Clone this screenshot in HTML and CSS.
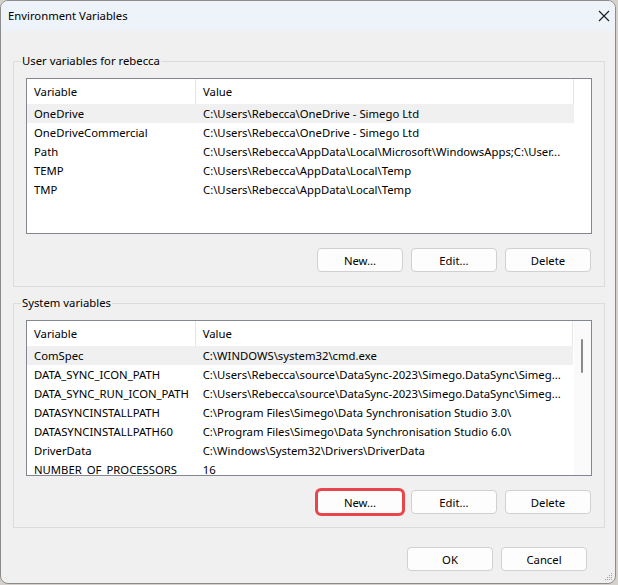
FILE: index.html
```html
<!DOCTYPE html>
<html>
<head>
<meta charset="utf-8">
<link rel="stylesheet" href="styles.css">
</head>
<body>
<div class="window">
  <div class="titlebar">
    <span class="title">Environment Variables</span>
    <svg class="close" width="12" height="12" viewBox="0 0 12 12"><path d="M1 1 L11 11 M11 1 L1 11" stroke="#1a1a1a" stroke-width="1.1" fill="none"/></svg>
  </div>
  <div class="content">
    <fieldset class="group">
      <legend>User variables for rebecca</legend>
      <div class="list">
        <div class="table">
          <div class="thead"><div class="th c1">Variable</div><div class="th c2">Value</div></div>
          <div class="row sel"><span class="c1">OneDrive</span><span class="c2">C:\Users\Rebecca\OneDrive - Simego Ltd</span></div>
          <div class="row"><span class="c1">OneDriveCommercial</span><span class="c2">C:\Users\Rebecca\OneDrive - Simego Ltd</span></div>
          <div class="row"><span class="c1">Path</span><span class="c2">C:\Users\Rebecca\AppData\Local\Microsoft\WindowsApps;C:\User...</span></div>
          <div class="row"><span class="c1">TEMP</span><span class="c2">C:\Users\Rebecca\AppData\Local\Temp</span></div>
          <div class="row"><span class="c1">TMP</span><span class="c2">C:\Users\Rebecca\AppData\Local\Temp</span></div>
        </div>
      </div>
      <div class="btnrow">
        <button>New...</button>
        <button>Edit...</button>
        <button>Delete</button>
      </div>
    </fieldset>
    <fieldset class="group group2">
      <legend>System variables</legend>
      <div class="list">
        <div class="table">
          <div class="thead"><div class="th c1">Variable</div><div class="th c2">Value</div></div>
          <div class="row sel"><span class="c1">ComSpec</span><span class="c2">C:\WINDOWS\system32\cmd.exe</span></div>
          <div class="row"><span class="c1">DATA_SYNC_ICON_PATH</span><span class="c2">C:\Users\Rebecca\source\DataSync-2023\Simego.DataSync\Simeg...</span></div>
          <div class="row"><span class="c1">DATA_SYNC_RUN_ICON_PATH</span><span class="c2">C:\Users\Rebecca\source\DataSync-2023\Simego.DataSync\Simeg...</span></div>
          <div class="row"><span class="c1">DATASYNCINSTALLPATH</span><span class="c2">C:\Program Files\Simego\Data Synchronisation Studio 3.0\</span></div>
          <div class="row"><span class="c1">DATASYNCINSTALLPATH60</span><span class="c2">C:\Program Files\Simego\Data Synchronisation Studio 6.0\</span></div>
          <div class="row"><span class="c1">DriverData</span><span class="c2">C:\Windows\System32\Drivers\DriverData</span></div>
          <div class="row"><span class="c1">NUMBER_OF_PROCESSORS</span><span class="c2">16</span></div>
        </div>
        <div class="scrollbar"><div class="thumb"></div></div>
      </div>
      <div class="btnrow">
        <button class="marked">New...</button>
        <button>Edit...</button>
        <button>Delete</button>
      </div>
    </fieldset>
    <div class="footer">
      <button>OK</button>
      <button>Cancel</button>
    </div>
  </div>
  <svg class="grip" width="9" height="9" viewBox="0 0 9 9">
    <g fill="#a0a0a0">
      <rect x="7" y="1" width="1" height="1"/>
      <rect x="5" y="3" width="1" height="1"/><rect x="7" y="3" width="1" height="1"/>
      <rect x="3" y="5" width="1" height="1"/><rect x="5" y="5" width="1" height="1"/><rect x="7" y="5" width="1" height="1"/>
      <rect x="1" y="7" width="1" height="1"/><rect x="3" y="7" width="1" height="1"/><rect x="5" y="7" width="1" height="1"/><rect x="7" y="7" width="1" height="1"/>
    </g>
  </svg>
</div>
</body>
</html>
```

FILE: styles.css
```css
html, body {
  margin: 0;
  padding: 0;
  background: #d6d1cb;
}

.window {
  position: relative;
  width: 616px;
  height: 584px;
  box-sizing: border-box;
  border: 1px solid #8c8c8c;
  border-radius: 8px;
  background: #f0f0f0;
  overflow: hidden;
  display: flex;
  flex-direction: column;
  font-family: "Segoe UI", "Noto Sans", sans-serif;
  font-size: 11.3px;
  color: #000;
}

.titlebar {
  flex: none;
  height: 30px;
  background: #eef2f9;
  display: flex;
  align-items: center;
  justify-content: space-between;
  padding: 0 5px 0 7px;
}

.title {
  line-height: 16px;
}

.close {
  display: block;
}

.content {
  padding: 22px 0 0 12px;
}

.group {
  width: 592px;
  box-sizing: border-box;
  margin: 0;
  min-width: 0;
  border: 1px solid #dcdcdc;
  padding: 9px 12px 14px;
}

.group2 {
  margin-top: 8px;
  padding-bottom: 13px;
}

legend {
  padding: 0 1px;
  margin-left: -5px;
  line-height: 16px;
}

.list {
  height: 156px;
  box-sizing: border-box;
  border: 1px solid #828790;
  background: #fff;
  display: flex;
}

.table {
  width: 547px;
  overflow: hidden;
}

.thead {
  display: flex;
  height: 25px;
}

.th {
  display: flex;
  align-items: center;
  box-sizing: border-box;
  padding-left: 7px;
  border-right: 1px solid #e5e5e5;
}

.c1 {
  width: 169px;
}

.c2 {
  width: 378px;
}

.row {
  display: flex;
  height: 19px;
  align-items: center;
  white-space: nowrap;
}

.row .c1,
.row .c2 {
  box-sizing: border-box;
  padding-left: 7px;
  overflow: hidden;
}

.sel {
  background: #f0f0f0;
}

.scrollbar {
  margin-left: 1px;
  width: 17px;
  background: #fafafa;
}

.thumb {
  margin: 18px 0 0 7px;
  width: 2px;
  height: 34px;
  border-radius: 1px;
  background: #8a8a8a;
}

.btnrow {
  display: flex;
  justify-content: flex-end;
  gap: 8px;
  margin-top: 14px;
  padding-right: 1px;
}

button {
  width: 86px;
  height: 24px;
  box-sizing: border-box;
  margin: 0;
  padding: 0;
  font: inherit;
  color: #000;
  background: #fdfdfd;
  border: 1px solid #d0d0d0;
  border-radius: 4px;
}

button.marked {
  outline: 3px solid #e8464c;
  outline-offset: -1px;
}

.footer {
  display: flex;
  justify-content: flex-end;
  gap: 8px;
  margin-top: 19px;
  padding-right: 28px;
}

.grip {
  position: absolute;
  right: 2px;
  bottom: 2px;
}
```
